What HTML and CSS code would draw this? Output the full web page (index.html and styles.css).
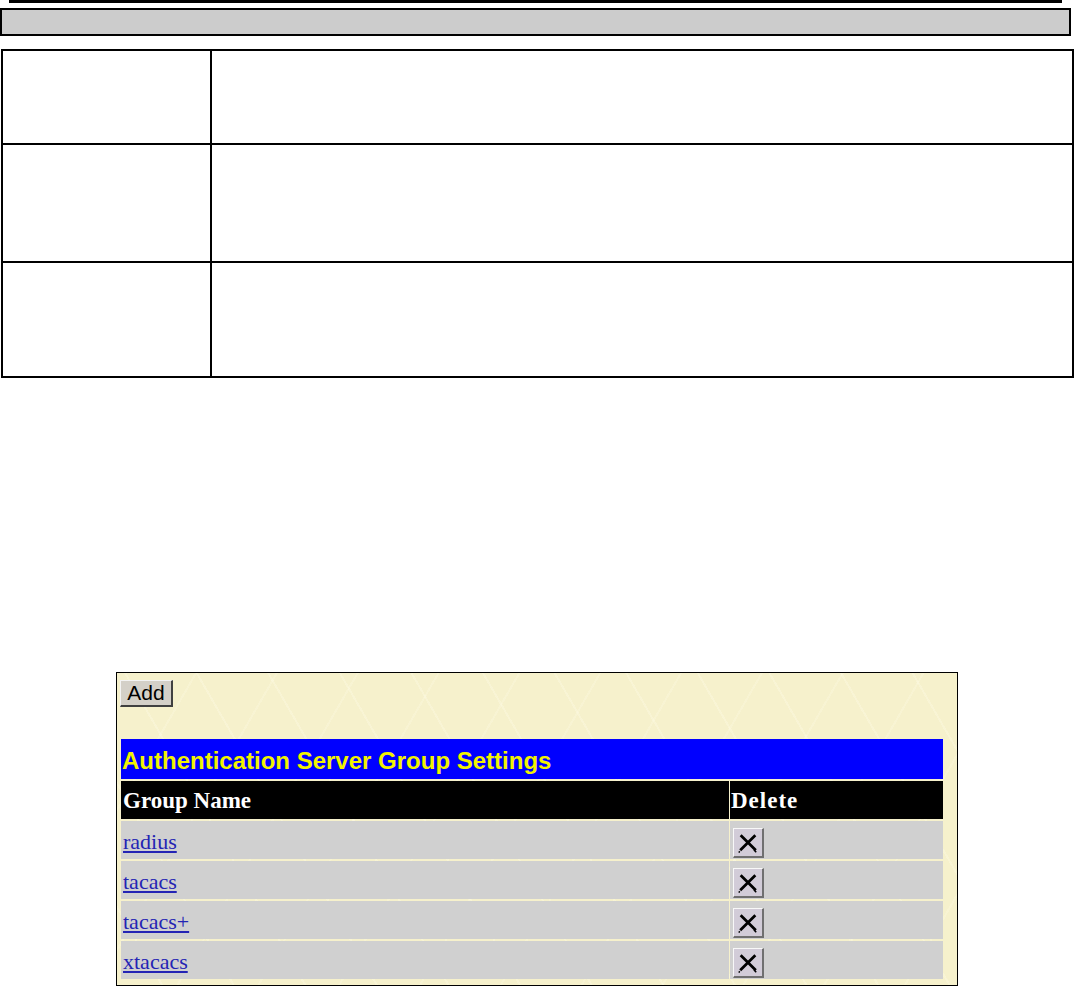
FILE: index.html
```html
<!DOCTYPE html>
<html>
<head>
<meta charset="utf-8">
<title>Authentication Server Group Settings</title>
<link rel="stylesheet" href="styles.css">
</head>
<body>
<div class="rule"></div>
<div class="bar"></div>
<div class="spec">
  <div class="spec-row r1"><div class="spec-key"></div><div class="spec-val"></div></div>
  <div class="spec-row r2"><div class="spec-key"></div><div class="spec-val"></div></div>
  <div class="spec-row r3"><div class="spec-key"></div><div class="spec-val"></div></div>
</div>
<div class="shot">
  <button class="add-btn" type="button">Add</button>
  <div class="grid">
    <div class="title">Authentication Server Group Settings</div>
    <div class="head">Group Name</div>
    <div class="head delete-head">Delete</div>
    <div class="cell"><a href="#">radius</a></div>
    <div class="cell del-cell"><span class="del"><svg viewBox="0 0 24 24" width="22" height="22"><path d="M4 3.5 L20.5 20 M20 3.5 L3.5 20" stroke="#000" stroke-width="3" stroke-linecap="butt"/><path d="M18.5 19.5 L21 22 M3 21 L2 22.5" stroke="#000" stroke-width="1.6"/></svg></span></div>
    <div class="cell"><a href="#">tacacs</a></div>
    <div class="cell del-cell"><span class="del"><svg viewBox="0 0 24 24" width="22" height="22"><path d="M4 3.5 L20.5 20 M20 3.5 L3.5 20" stroke="#000" stroke-width="3" stroke-linecap="butt"/><path d="M18.5 19.5 L21 22 M3 21 L2 22.5" stroke="#000" stroke-width="1.6"/></svg></span></div>
    <div class="cell"><a href="#">tacacs+</a></div>
    <div class="cell del-cell"><span class="del"><svg viewBox="0 0 24 24" width="22" height="22"><path d="M4 3.5 L20.5 20 M20 3.5 L3.5 20" stroke="#000" stroke-width="3" stroke-linecap="butt"/><path d="M18.5 19.5 L21 22 M3 21 L2 22.5" stroke="#000" stroke-width="1.6"/></svg></span></div>
    <div class="cell"><a href="#">xtacacs</a></div>
    <div class="cell del-cell"><span class="del"><svg viewBox="0 0 24 24" width="22" height="22"><path d="M4 3.5 L20.5 20 M20 3.5 L3.5 20" stroke="#000" stroke-width="3" stroke-linecap="butt"/><path d="M18.5 19.5 L21 22 M3 21 L2 22.5" stroke="#000" stroke-width="1.6"/></svg></span></div>
  </div>
</div>
</body>
</html>
```

FILE: styles.css
```css
html, body {
  margin: 0;
  padding: 0;
  background: #fff;
}
body {
  width: 1075px;
  font-family: "Liberation Serif", "Times New Roman", serif;
}
.rule {
  height: 3px;
  width: 1053px;
  margin-left: 9px;
  background: #000;
}
.bar {
  box-sizing: border-box;
  margin-top: 5px;
  width: 1071px;
  height: 28px;
  border: 2px solid #000;
  background: #cccccc;
}
.spec {
  box-sizing: border-box;
  margin-top: 13px;
  margin-left: 1px;
  width: 1073px;
  border: 2px solid #000;
}
.spec-row {
  display: flex;
  box-sizing: border-box;
}
.spec-row.r1 { height: 94px; border-bottom: 2px solid #000; }
.spec-row.r2 { height: 118px; border-bottom: 2px solid #000; }
.spec-row.r3 { height: 113px; }
.spec-key {
  width: 207px;
  border-right: 2px solid #000;
}
.spec-val { flex: 1; }

.shot {
  box-sizing: border-box;
  margin-top: 294px;
  margin-left: 116px;
  width: 842px;
  height: 314px;
  border: 1px solid #000;
  background-color: #f6f1cc;
  background-image:
    repeating-linear-gradient(60deg, rgba(255,253,235,0) 0 38px, rgba(255,253,235,0.28) 38px 40px, rgba(255,253,235,0) 40px 62px),
    repeating-linear-gradient(-60deg, rgba(255,253,235,0) 0 44px, rgba(255,253,235,0.22) 44px 46px, rgba(255,253,235,0) 46px 70px);
  padding: 7px 0 0 3px;
}
.add-btn {
  display: block;
  box-sizing: border-box;
  width: 53px;
  height: 27px;
  padding: 0 0 1px 0;
  margin: 0;
  font-family: "Liberation Sans", Arial, sans-serif;
  font-size: 21px;
  line-height: 24px;
  color: #000;
  background: #d4d0c8;
  border-style: solid;
  border-width: 1px 2px 2px 1px;
  border-color: #f4f4f4 #404040 #404040 #f4f4f4;
}
.grid {
  display: grid;
  grid-template-columns: 608px 213px;
  grid-template-rows: 40px 38px 38px 38px 38px 38px;
  column-gap: 1px;
  row-gap: 2px;
  margin-top: 32px;
  margin-left: 1px;
  width: 822px;
}
.title {
  grid-column: 1 / span 2;
  background: #0000ff;
  color: #f2f200;
  font-family: "Liberation Sans", Arial, sans-serif;
  font-weight: bold;
  font-size: 24px;
  line-height: 43px;
  padding-left: 1px;
  white-space: nowrap;
}
.head {
  background: #000;
  color: #fff;
  font-weight: bold;
  font-size: 23px;
  line-height: 39px;
  padding-left: 2px;
}
.delete-head {
  letter-spacing: 1px;
  padding-left: 1px;
}
.cell {
  background: #d0d0d0;
  display: flex;
  align-items: center;
  padding: 3px 0 0 2px;
  box-sizing: border-box;
  font-size: 22px;
}
.cell a {
  color: #2424b4;
  text-decoration: underline;
}
.del-cell {
  align-items: flex-start;
  padding: 0;
}
.del {
  display: flex;
  align-items: center;
  justify-content: center;
  box-sizing: border-box;
  width: 31px;
  height: 30px;
  margin-left: 3px;
  margin-top: 7px;
  background: #d2ccd8;
  border-style: solid;
  border-width: 1px 2px 2px 1px;
  border-color: #f8f8f8 #707070 #707070 #f8f8f8;
}
```
